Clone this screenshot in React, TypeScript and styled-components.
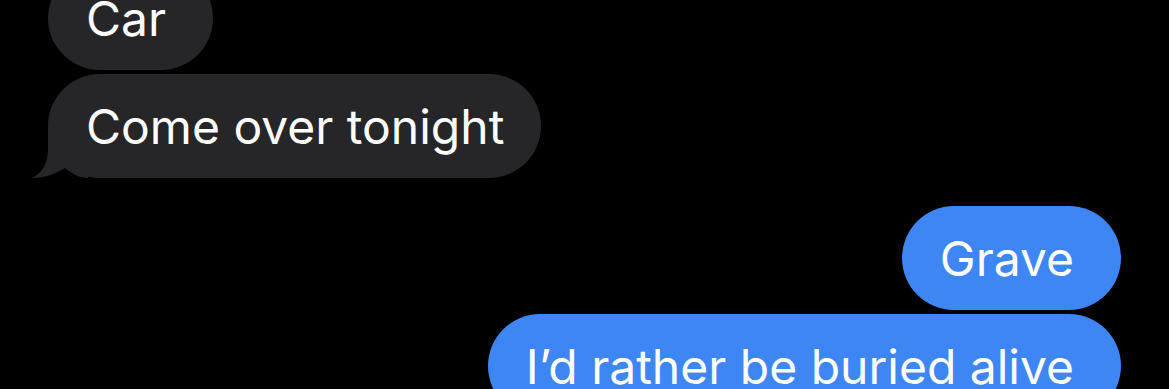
import React from "react";
import styled, { createGlobalStyle } from "styled-components";

const GlobalStyle = createGlobalStyle`
  html, body {
    margin: 0;
    padding: 0;
    background: #000;
    overflow: hidden;
  }
  body {
    font-family: Inter, "Noto Sans", "Liberation Sans", sans-serif;
  }
`;

const Screen = styled.div`
  width: 1169px;
  height: 389px;
  background: #000;
  overflow: hidden;
`;

const Thread = styled.div`
  display: flex;
  flex-direction: column;
  margin-top: -34px;
  padding: 0 48px;
`;

const Group = styled.div<{ $side: "left" | "right" }>`
  display: flex;
  flex-direction: column;
  align-items: ${(p) => (p.$side === "left" ? "flex-start" : "flex-end")};
  gap: 4px;
  & + & {
    margin-top: 28px;
  }
`;

const Bubble = styled.div<{ $sent?: boolean }>`
  position: relative;
  box-sizing: border-box;
  height: 104px;
  min-width: 165px;
  display: flex;
  align-items: center;
  padding: 1px ${(p) => (p.$sent ? "47px" : "37px")} 0 38px;
  border-radius: 52px;
  background: ${(p) => (p.$sent ? "#3e86f3" : "#262628")};
  color: #fff;
  font-size: 48px;
  white-space: nowrap;
`;

const Tail = styled.svg`
  position: absolute;
  left: -16px;
  bottom: 0;
  width: 56px;
  height: 50px;
`;

const Text = styled.span`
  line-height: 1;
`;

export default function App() {
  return (
    <Screen>
      <GlobalStyle />
      <Thread>
        <Group $side="left">
          <Bubble>
            <Text>Car</Text>
          </Bubble>
          <Bubble>
            <Tail viewBox="0 0 56 50">
              <path
                d="M16 0 L16 20 C16 36 10 45 0 50 C10 50 22 47 33 40 C40 46 48 50 56 50 L56 0 Z"
                fill="#262628"
              />
            </Tail>
            <Text>Come over tonight</Text>
          </Bubble>
        </Group>
        <Group $side="right">
          <Bubble $sent>
            <Text>Grave</Text>
          </Bubble>
          <Bubble $sent>
            <Text>I’d rather be buried alive</Text>
          </Bubble>
        </Group>
      </Thread>
    </Screen>
  );
}
